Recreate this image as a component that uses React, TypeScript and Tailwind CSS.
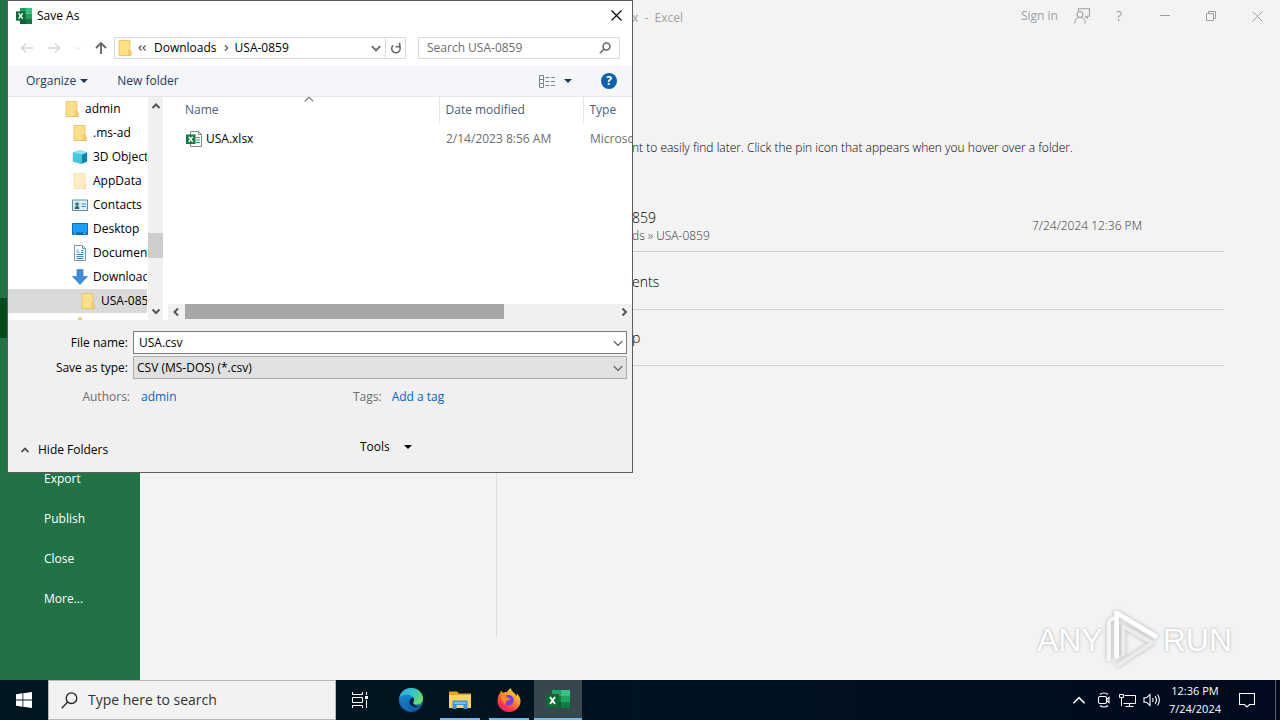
import type { ReactNode } from "react";

type TreeItem = {
  label: string;
  icon: ReactNode;
  pad: string;
  selected?: boolean;
};

function Folder({ faded = false }: { faded?: boolean }) {
  return (
    <svg width="16" height="16" viewBox="0 0 16 16" className={faded ? "opacity-50" : ""}>
      <path d="M2 .5h11v10.500l1 .5v4H2z" fill="#ffe08a" stroke="#e3bd55" strokeWidth=".8" />
      <path d="M3 1.500h9v13H3z" fill="#fddf86" />
      <path d="M11.700 10.500h1.300l1 1v4h-2.300z" fill="#f9d772" stroke="#e0b44c" strokeWidth=".6" />
    </svg>
  );
}

function CubeIcon() {
  return (
    <svg width="18" height="16" viewBox="0 0 18 16">
      <path d="M1 3 9 .5 17 3v10l-7 3-9-3z" fill="#31b4d3" />
      <path d="M1 3 9 .5 17 3l-6 2.500z" fill="#8ce5f2" />
      <path d="M11 5.500 17 3v10l-6 2.700z" fill="#0f86a8" />
      <path d="M1 3l10 2.500v10.200L1 13z" fill="#45c9df" />
    </svg>
  );
}

function ContactsIcon() {
  return (
    <svg width="16" height="16" viewBox="0 0 16 16">
      <path d="M.5 3h15v10.500H.5z" fill="#dff0fa" stroke="#5c8cab" />
      <path d="M2.500 5h5v7h-5z" fill="#a9d0e8" />
      <circle cx="5" cy="7" r="1.500" fill="#33684f" />
      <path d="M2.700 12c0-2 1-3 2.300-3s2.300 1 2.300 3z" fill="#33684f" />
      <path d="M9.500 7h4.500M9.500 9.500h4.500" stroke="#3d8ccb" />
    </svg>
  );
}

function DesktopIcon() {
  return (
    <svg width="16" height="16" viewBox="0 0 16 16">
      <path d="M.5 2.500h15v11H.5z" fill="#16a0fb" stroke="#0b6fc0" />
      <path d="M1 11.500h14V13H1z" fill="#0a60ad" />
      <path d="M2 12.300h2M11 12.300h3" stroke="#a8dcff" strokeWidth=".8" />
    </svg>
  );
}

function DocumentIcon() {
  return (
    <svg width="16" height="16" viewBox="0 0 16 16">
      <path d="M2.500.5h8l3 3v12h-11z" fill="#fff" stroke="#7d97a8" />
      <path d="M10.500.5v3h3" fill="none" stroke="#7d97a8" />
      <path d="M4.500 5h2M4.500 7h3M4.500 9.500h7M4.500 11.500h7M4.500 13.500h7M9 5.500h2.500M9 7.500h2.500" stroke="#3587c9" />
    </svg>
  );
}

function DownloadIcon() {
  return (
    <svg width="16" height="16" viewBox="0 0 16 16">
      <path d="M5 .5h6v7h4.500L8 15.500.5 7.500H5z" fill="#3b8ede" stroke="#2a78c4" strokeWidth=".6" />
    </svg>
  );
}

function ExcelIcon({ className }: { className: string }) {
  return (
    <svg viewBox="0 0 24 24" className={className}>
      <path d="M6 0h9v8H6z" fill="#21a366" />
      <path d="M15 0h9v8h-9z" fill="#33c481" />
      <path d="M6 8h9v8H6z" fill="#107c41" />
      <path d="M15 8h9v8h-9z" fill="#21a366" />
      <path d="M6 16h18v8H6z" fill="#185c37" />
      <path d="M15 16h9v8h-9z" fill="#107c41" />
      <path d="M0 5h14v14H0z" fill="#0f6e3a" />
      <path d="m4 8 6 8M10 8l-6 8" stroke="#fff" strokeWidth="2.200" />
    </svg>
  );
}

function XlsxFileIcon() {
  return (
    <svg width="16" height="16" viewBox="0 0 16 16">
      <path d="M4.500.5h8l3 3v12h-11z" fill="#fff" stroke="#7f8f86" />
      <path d="M12.500.5v3h3" fill="none" stroke="#7f8f86" />
      <path d="M10 6.500h4M10 9h4M10 11.500h4" stroke="#21a366" />
      <path d="M0 3.500h9.500v9.500H0z" fill="#107c41" />
      <path d="m2.700 5.700 4 5.200M6.700 5.700l-4 5.200" stroke="#fff" strokeWidth="1.500" />
    </svg>
  );
}

function Chevron({ dir, className }: { dir: "up" | "down" | "left" | "right"; className: string }) {
  const paths = {
    up: "M1.500 7 5 3.500 8.500 7",
    down: "M1.500 3.500 5 7l3.500-3.500",
    left: "M7 1.500 3.500 5 7 8.500",
    right: "M3.500 1.500 7 5 3.500 8.500",
  };
  return (
    <svg viewBox="0 0 10 10" fill="none" stroke="currentColor" className={className}>
      <path d={paths[dir]} />
    </svg>
  );
}

function Caret() {
  return (
    <svg width="8" height="4" viewBox="0 0 8 4" fill="currentColor">
      <path d="M0 0h8L4 4z" />
    </svg>
  );
}

const TREE: TreeItem[] = [
  { label: "admin", icon: <Folder />, pad: "pl-14" },
  { label: ".ms-ad", icon: <Folder />, pad: "pl-16" },
  { label: "3D Objects", icon: <CubeIcon />, pad: "pl-16" },
  { label: "AppData", icon: <Folder faded />, pad: "pl-16" },
  { label: "Contacts", icon: <ContactsIcon />, pad: "pl-16" },
  { label: "Desktop", icon: <DesktopIcon />, pad: "pl-16" },
  { label: "Documents", icon: <DocumentIcon />, pad: "pl-16" },
  { label: "Downloads", icon: <DownloadIcon />, pad: "pl-16" },
  { label: "USA-0859", icon: <Folder />, pad: "pl-18", selected: true },
];

const MENU = ["Export", "Publish", "Close", "More..."];

function AddressBar() {
  return (
    <div className="flex h-9 items-center pl-3 pr-3">
      <div className="flex w-[94px] items-center justify-between pr-[7px]">
        <button type="button" aria-label="Back" className="text-[#d5d5d5]">
          <svg width="14" height="12" viewBox="0 0 14 12" fill="none" stroke="currentColor" strokeWidth="1.400">
            <path d="M13 6H1.500M6 1.500 1.500 6 6 10.500" />
          </svg>
        </button>
        <button type="button" aria-label="Forward" className="text-[#d5d5d5]">
          <svg width="14" height="12" viewBox="0 0 14 12" fill="none" stroke="currentColor" strokeWidth="1.400">
            <path d="M1 6h11.500M8 1.500 12.500 6 8 10.500" />
          </svg>
        </button>
        <button type="button" aria-label="Recent locations" className="text-[#d5d5d5]">
          <Chevron dir="down" className="size-2" />
        </button>
        <button type="button" aria-label="Up" className="text-[#666]">
          <svg width="12" height="14" viewBox="0 0 12 14" fill="none" stroke="currentColor" strokeWidth="1.800">
            <path d="M6 13V2M1 7l5-5 5 5" />
          </svg>
        </button>
      </div>
      <div className="flex h-[22px] flex-1 items-center border border-[#d9d9d9]">
        <span className="pl-0.5">
          <Folder />
        </span>
        <span className="ml-1 flex text-[#555]">
          <svg width="10" height="8" viewBox="0 0 10 8" fill="none" stroke="currentColor" strokeWidth="1.200">
            <path d="M4.500 1.500 2 4l2.500 2.500M8.500 1.500 6 4l2.500 2.500" />
          </svg>
        </span>
        <button type="button" className="ml-[7px]">Downloads</button>
        <Chevron dir="right" className="mx-[5px] size-2 stroke-[1.7] text-[#666]" />
        <button type="button">USA-0859</button>
        <button type="button" aria-label="Previous locations" className="ml-auto mr-[3px] text-[#666]">
          <Chevron dir="down" className="size-3 stroke-[1.5]" />
        </button>
        <button type="button" aria-label="Refresh" className="flex h-full w-5 items-center justify-center border-l border-[#d9d9d9] text-[#666]">
          <svg width="12" height="12" viewBox="0 0 12 12" fill="none" stroke="currentColor" strokeWidth="1.600">
            <path d="M9.300 4A4.200 4.200 0 1 1 3.200 3.300" />
            <path d="M5.500 4.700h4.200V.8" />
          </svg>
        </button>
      </div>
      <label className="ml-3 flex h-[22px] w-[202px] items-center border border-[#d9d9d9] px-2">
        <input
          type="text"
          aria-label="Search USA-0859"
          placeholder="Search USA-0859"
          className="min-w-0 flex-1 outline-none placeholder:text-[#6d6d6d]"
        />
        <svg width="12" height="12" viewBox="0 0 12 12" fill="none" stroke="#666" strokeWidth="1.500">
          <circle cx="7.500" cy="4.500" r="3.500" />
          <path d="M5 7 .8 11.200" />
        </svg>
      </label>
    </div>
  );
}

function Toolbar() {
  return (
    <div className="flex h-[31px] items-center border-b border-[#e4e8ed] bg-[#f4f6f9] pl-[18px] pr-[15px] text-[#1e395b]">
      <button type="button" className="flex items-center gap-1">
        Organize <Caret />
      </button>
      <button type="button" className="ml-[29px]">New folder</button>
      <button type="button" aria-label="View" className="ml-auto flex items-center gap-2">
        <svg width="18" height="13" viewBox="0 0 18 13" fill="none" stroke="#7d838c">
          <path d="M1.500.5h4v12h-4zM1.500 4.500h4M1.500 8.500h4" />
          <path d="M7.500 2.500h4M13 2.500h4M7.500 6.500h4M13 6.500h4M7.500 10.500h4M13 10.500h4" />
        </svg>
        <Caret />
      </button>
      <button
        type="button"
        aria-label="Help"
        className="ml-[29px] flex size-4 items-center justify-center rounded-full bg-[#0b62b3] text-xs font-bold text-white"
      >
        ?
      </button>
    </div>
  );
}

function FolderTree() {
  return (
    <div className="flex w-[155px] shrink-0">
      <ul className="min-w-0 flex-1 overflow-hidden">
        {TREE.map((item) => (
          <li
            key={item.label}
            className={`flex h-6 items-center gap-[5px] overflow-hidden whitespace-nowrap ${item.pad} ${
              item.selected ? "bg-[#d9d9d9]" : ""
            }`}
          >
            <span className="flex w-4 shrink-0 justify-center">{item.icon}</span>
            {item.label}
          </li>
        ))}
        <li className="flex h-2 items-end pl-[70px]">
          <span className="h-1 w-1 rounded-t-full bg-[#f0c96a]" />
        </li>
      </ul>
      <div className="ml-px flex w-[15px] flex-col items-center bg-[#f0f0f0] text-[#555]">
        <Chevron dir="up" className="mt-1 size-2.5 stroke-2" />
        <div className="mt-[122px] h-[25px] w-full bg-[#cdcdcd]" />
        <Chevron dir="down" className="mb-1 mt-auto size-2.5 stroke-2" />
      </div>
    </div>
  );
}

function FileList() {
  return (
    <div className="ml-[5px] flex min-w-0 flex-1 flex-col">
      <div className="relative flex-1 overflow-hidden">
        <Chevron dir="up" className="absolute -top-1 left-[135px] size-3 text-[#777]" />
        <table className="w-full table-fixed border-collapse text-left">
          <thead>
            <tr className="h-[26px] text-[#4c607a]">
              <th className="w-[271px] pl-[17px] font-normal">Name</th>
              <th className="w-36 border-l border-[#e5e5e5] pl-1.5 font-normal">Date modified</th>
              <th className="border-l border-[#e5e5e5] pl-1.5 font-normal">Type</th>
            </tr>
          </thead>
          <tbody>
            <tr className="h-8 text-[#6d6d6d]">
              <td className="pl-[18px] text-black">
                <span className="flex items-center gap-1">
                  <XlsxFileIcon /> USA.xlsx
                </span>
              </td>
              <td className="pl-[7px]">2/14/2023 8:56 AM</td>
              <td className="overflow-hidden whitespace-nowrap pl-[7px]">Microso</td>
            </tr>
          </tbody>
        </table>
      </div>
      <div className="flex h-[15px] items-center bg-[#f0f0f0] text-[#555]">
        <Chevron dir="left" className="mx-[3px] size-2.5 stroke-2" />
        <div className="ml-px h-full w-[319px] bg-[#a6a6a6]" />
        <Chevron dir="right" className="ml-auto mr-[3px] size-2.5 stroke-2" />
      </div>
      <div className="h-px bg-[#f0f0f0]" />
    </div>
  );
}

function SaveAsDialog() {
  return (
    <section
      role="dialog"
      aria-label="Save As"
      className="absolute left-[7px] top-0 w-[626px] border border-[#5d5d5d] bg-white text-xs text-black"
    >
      <header className="flex h-[29px] items-center pl-2 pr-2.5">
        <ExcelIcon className="size-4" />
        <h1 className="ml-[5px]">Save As</h1>
        <button type="button" aria-label="Close dialog" className="ml-auto">
          <svg width="11" height="11" viewBox="0 0 11 11" stroke="#000" strokeWidth="1.100">
            <path d="m.5.5 10 10M10.500.5l-10 10" />
          </svg>
        </button>
      </header>
      <AddressBar />
      <Toolbar />
      <div className="flex h-[223px]">
        <FolderTree />
        <FileList />
      </div>
      <div className="bg-[#f0f0f0] pb-3.5 pl-3 pr-[5px] pt-[11px]">
        <div className="flex items-center">
          <label htmlFor="file-name" className="w-[113px] pr-[5px] text-right">File name:</label>
          <div className="flex h-[23px] flex-1 items-center border border-[#7a7a7a] bg-white pl-[5px] pr-0.5">
            <input id="file-name" type="text" defaultValue="USA.csv" className="min-w-0 flex-1 outline-none" />
            <Chevron dir="down" className="size-3 text-[#555]" />
          </div>
        </div>
        <div className="mt-0.5 flex items-center">
          <label htmlFor="file-type" className="w-[113px] pr-[5px] text-right">Save as type:</label>
          <div className="relative flex-1">
            <select
              id="file-type"
              className="block h-[23px] w-full appearance-none border border-[#adadad] bg-[#e1e1e1] pl-[3px] outline-none"
            >
              <option>CSV (MS-DOS) (*.csv)</option>
            </select>
            <Chevron dir="down" className="pointer-events-none absolute right-[3px] top-1.5 size-3 text-[#555]" />
          </div>
        </div>
        <div className="mt-2.5 flex items-center">
          <span className="w-[110px] text-right text-[#6d6d6d]">Authors:</span>
          <button type="button" className="ml-[11px] w-[212px] text-left text-[#0066cc]">admin</button>
          <span className="text-[#6d6d6d]">Tags:</span>
          <button type="button" className="ml-2.5 text-[#0066cc]">Add a tag</button>
        </div>
        <div className="mt-[34px] flex items-end">
          <button type="button" className="flex w-[340px] items-center gap-2">
            <Chevron dir="up" className="size-2.5 stroke-[1.7] text-[#444]" />
            Hide Folders
          </button>
          <button type="button" className="flex items-center gap-3.5 pb-[3px]">
            Tools <Caret />
          </button>
        </div>
      </div>
    </section>
  );
}

function Sidebar() {
  return (
    <nav className="w-[140px] shrink-0 bg-[#217346] pt-[298px] text-xs text-white">
      <div className="h-10 bg-[#004b1c]" />
      <ul className="pt-[121px]">
        {MENU.map((label) => (
          <li key={label}>
            <button type="button" className="flex h-10 w-full items-center pl-11">
              {label}
            </button>
          </li>
        ))}
      </ul>
    </nav>
  );
}

function TitleBar() {
  return (
    <header className="flex h-8 items-center pl-[492px] pr-[17px] text-xs text-[#a0a0a0]">
      <span className="whitespace-pre pt-1">x  -  Excel</span>
      <div className="ml-auto flex items-center">
        <button type="button">Sign in</button>
        <button type="button" aria-label="Feedback" className="ml-4">
          <svg width="16" height="16" viewBox="0 0 16 16" fill="none" stroke="currentColor" strokeWidth="1.100">
            <path d="M4.500 3V.7h11v7.500h-2.300v2l-2.200-2" />
            <circle cx="6" cy="6.500" r="3" />
            <path d="M.7 15.500c0-3.500 2.300-6 5.300-6s5.300 2.500 5.300 6" />
          </svg>
        </button>
        <button type="button" aria-label="Help" className="ml-[26px] text-sm">?</button>
        <button type="button" aria-label="Minimize" className="ml-[38px]">
          <svg width="10" height="10" viewBox="0 0 10 10" stroke="currentColor">
            <path d="M0 4.500h10" />
          </svg>
        </button>
        <button type="button" aria-label="Restore" className="ml-9">
          <svg width="10" height="10" viewBox="0 0 10 10" fill="none" stroke="currentColor">
            <path d="M.5 2.500h7v7h-7zM2.500 2.500v-2h7v7h-2" />
          </svg>
        </button>
        <button type="button" aria-label="Close" className="ml-9">
          <svg width="11" height="11" viewBox="0 0 11 11" stroke="currentColor">
            <path d="m.5.5 10 10M10.500.5l-10 10" />
          </svg>
        </button>
      </div>
    </header>
  );
}

function Watermark() {
  return (
    <div className="absolute bottom-2 right-12 flex items-center font-['Liberation_Sans_Narrow','Liberation_Sans',sans-serif] text-[32px] leading-none text-white [text-shadow:0_0_3px_#a8a8a8]">
      <span>ANY</span>
      <svg width="56" height="64" viewBox="0 0 58 64" fill="none" className="mx-0.5 drop-shadow-[0_0_2px_#b5b5b5]">
        <path d="M4 54V12M4 12l6-3" stroke="#f7f7f7" strokeWidth="4" />
        <path d="M12 49V4l40 24" stroke="#fff" strokeWidth="5" strokeLinejoin="round" strokeLinecap="round" />
        <path d="M19 47V18l30 17-36 23" stroke="#ececec" strokeWidth="4" strokeLinejoin="round" strokeLinecap="round" />
      </svg>
      <span>RUN</span>
    </div>
  );
}

function Backstage() {
  return (
    <main className="relative flex min-w-0 flex-1 flex-col bg-[#f3f3f3] text-xs">
      <TitleBar />
      <div className="flex flex-1 pb-[43px]">
        <div className="w-[357px] shrink-0 border-r border-[#dedede]" />
        <div className="flex-1 pl-[135px] pr-14 pt-[108px] font-light">
          <p className="text-black">nt to easily find later. Click the pin icon that appears when you hover over a folder.</p>
          <ul className="mt-[38px]">
            <li className="flex h-[58px] items-center justify-between border-b border-[#d0d0d0] pr-[82px] pt-1.5">
              <div>
                <p className="text-sm text-black">859</p>
                <p className="text-[#333]">ds » USA-0859</p>
              </div>
              <span className="text-[#333]">7/24/2024 12:36 PM</span>
            </li>
            <li className="flex h-[58px] items-center border-b border-[#d0d0d0] pt-0.5 text-sm text-black">ents</li>
            <li className="flex h-14 items-center border-b border-[#d0d0d0] text-sm text-black">p</li>
          </ul>
        </div>
      </div>
      <Watermark />
    </main>
  );
}

function EdgeIcon() {
  return (
    <svg width="24" height="24" viewBox="0 0 24 24">
      <defs>
        <linearGradient id="edge-top" x1="0" y1="0" x2="1" y2=".6">
          <stop offset="0" stopColor="#2ba8e8" />
          <stop offset=".6" stopColor="#35c8c0" />
          <stop offset="1" stopColor="#6be05a" />
        </linearGradient>
        <linearGradient id="edge-low" x1="0" y1="0" x2="0" y2="1">
          <stop offset="0" stopColor="#1b9de2" />
          <stop offset="1" stopColor="#0c59a4" />
        </linearGradient>
      </defs>
      <circle cx="12" cy="12" r="12" fill="url(#edge-low)" />
      <path d="M.2 10C1.500 4 6.200 0 12 0c7 0 12 5 12 10.500 0 3.800-3 6-6 6-2.300 0-4-.8-4-1.700 0-.7 1-1.200 1-2.800C15 9 12 6.500 8.300 6.500 4.500 6.500 1.500 8 .2 10z" fill="url(#edge-top)" />
      <path d="M14.500 9.500c-3 .3-4.500 2.500-4 5 .5 3 3.500 5 7 4.700 2-.2 3.500-1 5-2-1.500 1-3 1.200-4.500 1-2.500-.3-4-2-4-3.400 0-.7 1-1.200 1-2.800 0-1-.2-1.800-.5-2.500z" fill="#03223c" />
      <path d="M8.500 9c-3 4 -1.500 11 5 14.500C6 23 2 18 2.500 13 3 9.500 6 8 8.500 9z" fill="#1478c4" opacity=".6" />
    </svg>
  );
}

function ExplorerIcon() {
  return (
    <svg width="22" height="20" viewBox="0 0 22 20">
      <path d="M0 1.500h8l2 2h12V8H0z" fill="#e9a520" />
      <path d="M0 5h22v13H0z" fill="#ffd35e" />
      <path d="M3.500 10.500h15V19h-4v-4h-7v4h-4z" fill="#3d95d8" />
      <path d="M5 12h12v2H5z" fill="#7cc0ee" />
    </svg>
  );
}

function FirefoxIcon() {
  return (
    <svg width="24" height="24" viewBox="0 0 24 24">
      <defs>
        <linearGradient id="fox" x1=".9" y1="0" x2=".2" y2="1">
          <stop offset="0" stopColor="#fff14a" />
          <stop offset=".4" stopColor="#ff9a24" />
          <stop offset=".75" stopColor="#ff3b48" />
          <stop offset="1" stopColor="#e31587" />
        </linearGradient>
      </defs>
      <path d="M3 5c.3-1 .9-1.800 1.600-2.500.2 1 .6 1.700 1.200 2.300C7.500 4 9 4 10 4.300 10.800 2.500 12 1 14 0c0 2 1 3.200 2.700 4.500C18 5.600 19 7 19.500 8.500c.3-.9.300-2-.1-3.200C22 7.500 23.500 10 23.500 13 23.500 19 18.500 24 12 24S.5 19 .5 13C.5 10 1.500 7 3 5z" fill="url(#fox)" />
      <path d="M8 8.500c1.500-1.800 5-2 7-.2 2.200 2 2.500 5.200.8 7.300-1.800 2.200-5.300 2.400-7.300.6-1-1-1.600-2.300-1.500-3.700 1 .8 2.300.9 3.500.2 1-.6 1.700-1 2.500-1-.5-1.400-2.500-1.300-3.400-1.600C8.700 9.800 8.200 9.200 8 8.500z" fill="#7542e5" />
      <path d="M4 8.500c1.500-1.500 4-1.500 5.500-.5-.4 1 .5 2 3.500 2.500-.5 1.500-2.500 1.700-3.500 2.500-.8.800-1 2 0 3-3-.5-5-3.500-5.500-7.500z" fill="#ff8a1e" />
    </svg>
  );
}

function TaskbarExcel() {
  return (
    <svg width="24" height="20" viewBox="0 0 24 20">
      <path d="M6 0h9v6H6z" fill="#21a366" />
      <path d="M15 0h9v6h-9z" fill="#33c481" />
      <path d="M6 6h9v6H6z" fill="#107c41" />
      <path d="M15 6h9v6h-9z" fill="#21a366" />
      <path d="M6 12h18v6H6z" fill="#185c37" />
      <path d="M15 12h9v6h-9z" fill="#107c41" />
      <path d="M0 4h13v13H0z" fill="#0d6a37" />
      <path d="m4 7 5 7M9 7l-5 7" stroke="#fff" strokeWidth="1.900" />
    </svg>
  );
}

function Taskbar() {
  return (
    <footer className="flex h-10 shrink-0 items-stretch bg-linear-to-r from-[#00171f] via-[#001320] to-[#000a1e] text-white">
      <button type="button" aria-label="Start" className="flex w-12 items-center justify-center">
        <svg width="16" height="16" viewBox="0 0 16 16" fill="#fff">
          <path d="M0 2.300 6.500 1.300v6.300H0zM7.300 1.200 16 0v7.600H7.300zM0 8.400h6.500v6.300L0 13.700zM7.300 8.400H16V16l-8.700-1.200z" />
        </svg>
      </button>
      <label className="flex w-72 items-center border border-[#b8b8b8] bg-[#f2f2f2] pl-3 text-[#222]">
        <svg width="17" height="17" viewBox="0 0 17 17" fill="none" stroke="#222" strokeWidth="1.300">
          <circle cx="10.500" cy="6.200" r="5.300" />
          <path d="M6.700 10 .7 16.200" />
        </svg>
        <input
          type="text"
          aria-label="Type here to search"
          placeholder="Type here to search"
          className="ml-2.5 min-w-0 flex-1 text-sm outline-none placeholder:text-[#333]"
        />
      </label>
      <div className="flex gap-px">
        <button type="button" aria-label="Task View" className="mr-0.5 flex w-12 items-center justify-center">
          <svg width="17" height="16" viewBox="0 0 17 16" fill="none" stroke="#fff">
            <path d="M.5 0v2.500h10V0M.5 5.500h10v5H.5zM.5 16v-2.500h10V16M14.500 0v3M14.500 8v8" />
            <path d="M13 4h3v3h-3z" fill="#fff" stroke="none" />
          </svg>
        </button>
        <button type="button" aria-label="Microsoft Edge" className="flex w-12 items-center justify-center">
          <EdgeIcon />
        </button>
        <button type="button" aria-label="File Explorer" className="flex w-12 flex-col items-center">
          <span className="flex flex-1 items-center pt-0.5"><ExplorerIcon /></span>
          <span className="h-0.5 w-10 bg-[#76b9ed]" />
        </button>
        <button type="button" aria-label="Firefox" className="flex w-12 flex-col items-center">
          <span className="flex flex-1 items-center pt-0.5"><FirefoxIcon /></span>
          <span className="h-0.5 w-10 bg-[#76b9ed]" />
        </button>
        <button type="button" aria-label="Excel" className="flex w-12 flex-col items-center bg-[#36474d]">
          <span className="flex flex-1 items-center pt-0.5"><TaskbarExcel /></span>
          <span className="h-0.5 w-full bg-[#76b9ed]" />
        </button>
      </div>
      <div className="ml-auto flex items-center">
        <button type="button" aria-label="Show hidden icons">
          <Chevron dir="up" className="size-4" />
        </button>
        <button type="button" aria-label="Meet Now" className="ml-2.5">
          <svg width="14" height="16" viewBox="0 0 14 16" fill="none" stroke="#fff" strokeWidth="1.100">
            <path d="M3 2.500C5 .5 9 .5 11 2.500M3 13.500c2 2 6 2 8 0" />
            <rect x="1.500" y="4.500" width="8" height="7" rx="1.500" />
            <path d="m9.500 7.500 2.500-2v5l-2.500-2" />
          </svg>
        </button>
        <button type="button" aria-label="Network" className="ml-2">
          <svg width="17" height="15" viewBox="0 0 17 15" fill="none" stroke="#fff">
            <path d="M5.500 2.500h11v8h-12M10.500 10.500v3M6.500 13.500h8" />
            <path d="M.5 1.500h4v3h-4zM2.500 4.500v8.500" />
          </svg>
        </button>
        <button type="button" aria-label="Volume" className="ml-[7px]">
          <svg width="18" height="14" viewBox="0 0 18 14" fill="none" stroke="#fff" strokeWidth="1.100">
            <path d="M1 4.800h2.500L7 1.500v11L3.500 9.200H1z" />
            <path d="M9.500 5c.8 1.200.8 2.800 0 4M12 3.200c1.700 2.200 1.700 5.400 0 7.600M14.500 1.500c2.500 3.200 2.500 7.800 0 11" />
          </svg>
        </button>
        <div className="ml-2 text-center text-[11px] leading-[18px]">
          <p>12:36 PM</p>
          <p>7/24/2024</p>
        </div>
        <button type="button" aria-label="Notifications" className="ml-[18px]">
          <svg width="16" height="16" viewBox="0 0 16 16" fill="none" stroke="#fff" strokeWidth="1.100">
            <path d="M.5 1.500h15v11H10.500L8 15l-2.500-2.500h-5z" />
          </svg>
        </button>
        <div className="ml-5 mr-1 h-10 w-px bg-[#5a6070]" />
      </div>
    </footer>
  );
}

export default function App() {
  return (
    <div className="relative flex h-screen min-h-[640px] flex-col overflow-hidden font-['Open_Sans','Noto_Sans',sans-serif]">
      <div className="flex min-h-0 flex-1">
        <Sidebar />
        <Backstage />
      </div>
      <Taskbar />
      <SaveAsDialog />
    </div>
  );
}
